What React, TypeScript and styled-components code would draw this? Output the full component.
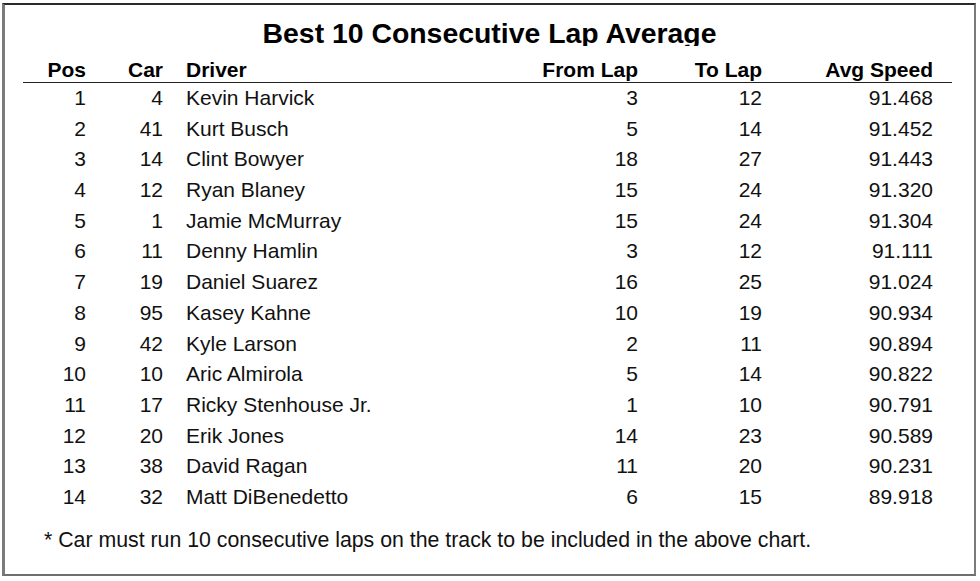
import styled, { createGlobalStyle } from "styled-components";

const GlobalStyle = createGlobalStyle`
    html, body {
        margin: 0;
        padding: 0;
        background: #ffffff;
    }
    body {
        font-family: "Liberation Sans", Arial, Helvetica, sans-serif;
        color: #111111;
    }
`;

const Frame = styled.div`
    box-sizing: border-box;
    margin: 3px 0 0 2px;
    width: 974px;
    height: 573px;
    border-top: 2px solid #2a2a2a;
    border-left: 3px solid #7b7b7b;
    border-right: 2px solid #7b7b7b;
    border-bottom: 2px solid #6f6f6f;
    background: #ffffff;
`;

// the source chart crops the title just under the baseline
const Title = styled.h1`
    margin: 14px 0 0 0;
    height: 27px;
    overflow: hidden;
    font-size: 28.4px;
    line-height: 28px;
    font-weight: 700;
    text-align: center;
    color: #000000;
`;

const Table = styled.div`
    margin: 11px 0 0 18px;
    width: 929px;
`;

const columns = "63px 77px 357px 118px 124px 171px";

const HeaderRow = styled.div`
    display: grid;
    grid-template-columns: ${columns};
    height: 25px;
    line-height: 25px;
    font-size: 21px;
    font-weight: 700;
    color: #000000;
    border-bottom: 1px solid #222222;
`;

const Row = styled.div`
    display: grid;
    grid-template-columns: ${columns};
    height: 30.7px;
    line-height: 30.7px;
    font-size: 21px;
    color: #111111;
`;

const Cell = styled.div<{ $left?: boolean }>`
    white-space: nowrap;
    text-align: ${(p) => (p.$left ? "left" : "right")};
    padding-left: ${(p) => (p.$left ? "23px" : "0")};
`;

const Note = styled.p`
    margin: 15px 0 0 39px;
    font-size: 21.3px;
    line-height: 24px;
    color: #111111;
`;

type Result = {
    pos: number;
    car: number;
    driver: string;
    from: number;
    to: number;
    speed: string;
};

const results: Result[] = [
    { pos: 1, car: 4, driver: "Kevin Harvick", from: 3, to: 12, speed: "91.468" },
    { pos: 2, car: 41, driver: "Kurt Busch", from: 5, to: 14, speed: "91.452" },
    { pos: 3, car: 14, driver: "Clint Bowyer", from: 18, to: 27, speed: "91.443" },
    { pos: 4, car: 12, driver: "Ryan Blaney", from: 15, to: 24, speed: "91.320" },
    { pos: 5, car: 1, driver: "Jamie McMurray", from: 15, to: 24, speed: "91.304" },
    { pos: 6, car: 11, driver: "Denny Hamlin", from: 3, to: 12, speed: "91.111" },
    { pos: 7, car: 19, driver: "Daniel Suarez", from: 16, to: 25, speed: "91.024" },
    { pos: 8, car: 95, driver: "Kasey Kahne", from: 10, to: 19, speed: "90.934" },
    { pos: 9, car: 42, driver: "Kyle Larson", from: 2, to: 11, speed: "90.894" },
    { pos: 10, car: 10, driver: "Aric Almirola", from: 5, to: 14, speed: "90.822" },
    { pos: 11, car: 17, driver: "Ricky Stenhouse Jr.", from: 1, to: 10, speed: "90.791" },
    { pos: 12, car: 20, driver: "Erik Jones", from: 14, to: 23, speed: "90.589" },
    { pos: 13, car: 38, driver: "David Ragan", from: 11, to: 20, speed: "90.231" },
    { pos: 14, car: 32, driver: "Matt DiBenedetto", from: 6, to: 15, speed: "89.918" },
];

const App = () => {
    return (
        <>
            <GlobalStyle />
            <Frame>
                <Title>Best 10 Consecutive Lap Average</Title>
                <Table>
                    <HeaderRow>
                        <Cell>Pos</Cell>
                        <Cell>Car</Cell>
                        <Cell $left>Driver</Cell>
                        <Cell>From Lap</Cell>
                        <Cell>To Lap</Cell>
                        <Cell>Avg Speed</Cell>
                    </HeaderRow>
                    {results.map((r) => (
                        <Row key={r.pos}>
                            <Cell>{r.pos}</Cell>
                            <Cell>{r.car}</Cell>
                            <Cell $left>{r.driver}</Cell>
                            <Cell>{r.from}</Cell>
                            <Cell>{r.to}</Cell>
                            <Cell>{r.speed}</Cell>
                        </Row>
                    ))}
                </Table>
                <Note>* Car must run 10 consecutive laps on the track to be included in the above chart.</Note>
            </Frame>
        </>
    );
};

export default App;
